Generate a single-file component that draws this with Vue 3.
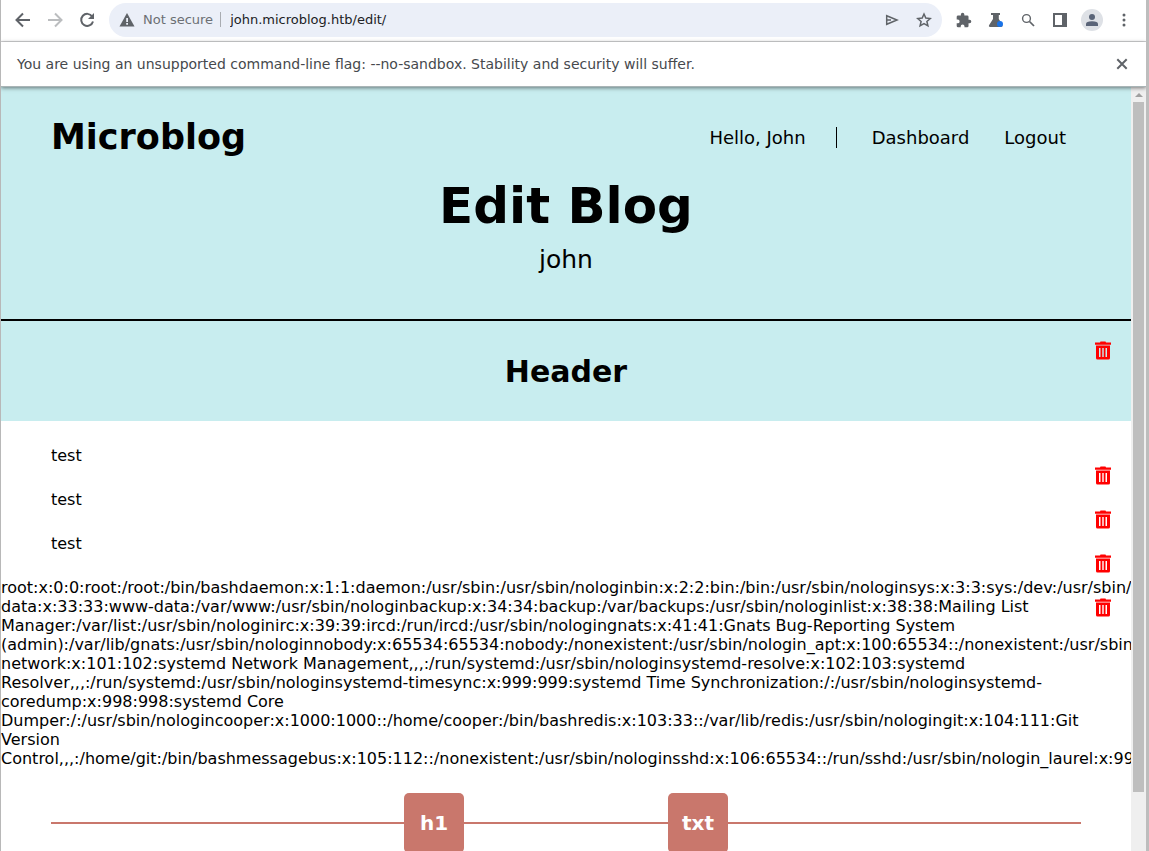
<script setup>
import { ref } from 'vue'

const address = ref('john.microblog.htb/edit/')

const passwd = [
  'root:x:0:0:root:/root:/bin/bashdaemon:x:1:1:daemon:/usr/sbin:/usr/sbin/nologinbin:x:2:2:bin:/bin:/usr/sbin/nologinsys:x:3:3:sys:/dev:/usr/sbin/',
  'data:x:33:33:www-data:/var/www:/usr/sbin/nologinbackup:x:34:34:backup:/var/backups:/usr/sbin/nologinlist:x:38:38:Mailing List',
  'Manager:/var/list:/usr/sbin/nologinirc:x:39:39:ircd:/run/ircd:/usr/sbin/nologingnats:x:41:41:Gnats Bug-Reporting System',
  '(admin):/var/lib/gnats:/usr/sbin/nologinnobody:x:65534:65534:nobody:/nonexistent:/usr/sbin/nologin_apt:x:100:65534::/nonexistent:/usr/sbin',
  'network:x:101:102:systemd Network Management,,,:/run/systemd:/usr/sbin/nologinsystemd-resolve:x:102:103:systemd',
  'Resolver,,,:/run/systemd:/usr/sbin/nologinsystemd-timesync:x:999:999:systemd Time Synchronization:/:/usr/sbin/nologinsystemd-',
  'coredump:x:998:998:systemd Core',
  'Dumper:/:/usr/sbin/nologincooper:x:1000:1000::/home/cooper:/bin/bashredis:x:103:33::/var/lib/redis:/usr/sbin/nologingit:x:104:111:Git',
  'Version',
  'Control,,,:/home/git:/bin/bashmessagebus:x:105:112::/nonexistent:/usr/sbin/nologinsshd:x:106:65534::/run/sshd:/usr/sbin/nologin_laurel:x:99'
].join('\n')

const blocks = ref([
  { id: 1, type: 'header', text: 'Header' },
  { id: 2, type: 'text', text: 'test' },
  { id: 3, type: 'text', text: 'test' },
  { id: 4, type: 'text', text: 'test' },
  { id: 5, type: 'raw', text: passwd }
])

const remove = (id) => {
  blocks.value = blocks.value.filter((block) => block.id !== id)
}
</script>

<template>
  <div class="window">
    <header class="toolbar">
      <button class="tool" aria-label="Back">
        <svg width="16" height="16" viewBox="0 0 16 16" fill="none" stroke="#5f6368" stroke-width="2"><path d="M15 8H2M8 1.500L1.500 8L8 14.500" /></svg>
      </button>
      <button class="tool" aria-label="Forward">
        <svg width="16" height="16" viewBox="0 0 16 16" fill="none" stroke="#bbbdbf" stroke-width="2"><path d="M1 8h13M8 1.500l6.500 6.500L8 14.500" /></svg>
      </button>
      <button class="tool" aria-label="Reload">
        <svg width="16" height="16" viewBox="0 0 16 16"><path d="M13.200 4.500A6 6 0 1 0 14 9.500" fill="none" stroke="#5f6368" stroke-width="2" /><path d="M15 1v6H9z" fill="#5f6368" /></svg>
      </button>
      <div class="omnibox">
        <svg class="warning" width="16" height="14" viewBox="0 0 16 14"><path d="M8 0l7.500 13.500H.5z" fill="#5f6368" /><path d="M7.200 5h1.800v4H7.200zM7.200 10h1.800v1.800H7.200z" fill="#ebeff8" /></svg>
        <label class="security" for="address">Not secure</label>
        <input id="address" v-model="address" class="address" type="text" spellcheck="false">
        <button class="tool" aria-label="Share">
          <svg width="14" height="12" viewBox="0 0 14 12" fill="none" stroke="#5f6368" stroke-width="1.500"><path d="M1.700 1.700L12 6L1.700 10.300zM1.700 6H6" /></svg>
        </button>
        <button class="tool" aria-label="Bookmark">
          <svg width="16" height="16" viewBox="0 0 16 16" fill="none" stroke="#5f6368" stroke-width="1.500"><path d="M8 2l1.800 4.100 4.400.4-3.300 2.900 1 4.400L8 11.500l-3.900 2.300 1-4.400L1.800 6.500l4.400-.4z" /></svg>
        </button>
      </div>
      <button class="tool" aria-label="Extensions">
        <svg width="16" height="16" viewBox="1 0 23 23" fill="#5f6368"><path d="M20.500 11H19V7a2 2 0 0 0-2-2h-4V3.500a2.500 2.500 0 0 0-5 0V5H4a2 2 0 0 0-2 2v3.800h1.500a2.700 2.700 0 0 1 0 5.400H2V20a2 2 0 0 0 2 2h3.800v-1.500a2.700 2.700 0 0 1 5.400 0V22H17a2 2 0 0 0 2-2v-4h1.500a2.500 2.500 0 0 0 0-5z" /></svg>
      </button>
      <button class="tool" aria-label="Experiments">
        <svg width="16" height="16" viewBox="0 0 16 16"><path d="M3 1h9v2h-1.200v4L14.500 13q.5 2-1.500 2H2.200q-2-.2-1-2L5 7V3H3z" fill="#5f6368" /><circle cx="12" cy="12" r="3" fill="#1a73e8" /></svg>
      </button>
      <button class="tool" aria-label="Search">
        <svg width="14" height="14" viewBox="0 0 14 14" fill="none" stroke="#5f6368"><circle cx="5.500" cy="5.500" r="3.900" stroke-width="1.400" /><path d="M8.500 8.500L13 13" stroke-width="1.700" /></svg>
      </button>
      <button class="tool" aria-label="Side panel">
        <svg width="14" height="14" viewBox="0 0 14 14"><path d="M0 0h14v14H0z" fill="#5f6368" /><path d="M2 2h7v10H2z" fill="#fff" /></svg>
      </button>
      <button class="tool" aria-label="Profile">
        <svg width="22" height="22" viewBox="0 0 22 22"><circle cx="11" cy="11" r="11" fill="#dee1e6" /><g fill="#5a6478"><circle cx="11" cy="8" r="3" /><path d="M5 17v-2q0-2.800 6-2.800t6 2.800v2z" /></g></svg>
      </button>
      <button class="tool" aria-label="Menu">
        <svg width="4" height="14" viewBox="0 0 4 14" fill="#5f6368"><circle cx="2" cy="2" r="1.500" /><circle cx="2" cy="7" r="1.500" /><circle cx="2" cy="12" r="1.500" /></svg>
      </button>
    </header>

    <div class="infobar">
      <p>You are using an unsupported command-line flag: --no-sandbox. Stability and security will suffer.</p>
      <button class="tool" aria-label="Close">
        <svg width="12" height="12" viewBox="0 0 12 12" fill="none" stroke="#5f6368" stroke-width="2"><path d="M1.300 1.300l9.400 9.400M10.700 1.300l-9.400 9.400" /></svg>
      </button>
    </div>

    <div class="viewport">
      <main class="page">
        <div class="hero">
          <nav class="nav">
            <a class="brand" href="#">Microblog</a>
            <span class="greeting">Hello, John</span>
            <a class="link" href="#">Dashboard</a>
            <a class="link" href="#">Logout</a>
          </nav>
          <h1 class="title">Edit Blog</h1>
          <p class="blog-name">john</p>
        </div>

        <section class="blocks">
          <article v-for="block in blocks" :key="block.id" class="block" :class="block.type">
            <h2 v-if="block.type === 'header'">{{ block.text }}</h2>
            <p v-else>{{ block.text }}</p>
            <button class="delete" aria-label="Delete block" @click="remove(block.id)">
              <svg width="16" height="19" viewBox="0 0 16 19"><path d="M5.500 0.500h5l.5 1h5v2.300H0v-2.300h5z" fill="#f00" /><path fill-rule="evenodd" d="M1 4.400h14V17q0 1.500-1.500 1.500h-11Q1 18.500 1 17zM4 7v9h1.500V7zM7.300 7v9h1.400V7zM10.500 7v9H12V7z" fill="#f00" /></svg>
            </button>
          </article>
        </section>

        <div class="adders">
          <button class="add">h1</button>
          <button class="add">txt</button>
        </div>
      </main>

      <div class="scrollbar" aria-hidden="true">
        <svg width="8" height="4" viewBox="0 0 8 4"><path d="M4 0l4 4H0z" fill="#a0a0a0" /></svg>
        <div class="thumb"></div>
      </div>
    </div>
  </div>
</template>

<style>
body {
  margin: 0;
}
</style>

<style scoped>
.window {
  box-sizing: border-box;
  display: flex;
  flex-direction: column;
  height: 100vh;
  overflow: hidden;
  border-left: 1px solid #b8b8b8;
  border-right: 3px solid #bdbdbd;
  background: #fff;
  color: #000;
  font-family: "DejaVu Sans", sans-serif;
}

button {
  padding: 0;
  border: 0;
  background: none;
  font-family: inherit;
  cursor: pointer;
}

p,
h1,
h2 {
  margin: 0;
}

a {
  color: inherit;
  text-decoration: none;
}

.toolbar {
  display: flex;
  flex: none;
  align-items: center;
  box-sizing: border-box;
  height: 42px;
  padding: 0 6px 2px;
  border-bottom: 1px solid #d5d6d8;
}

.tool {
  display: flex;
  flex: none;
  align-items: center;
  justify-content: center;
  width: 32px;
  height: 32px;
}

.omnibox {
  display: flex;
  flex: 1;
  align-items: center;
  min-width: 0;
  height: 34px;
  margin: 0 6px;
  padding: 0 2px 0 10px;
  box-sizing: border-box;
  border-radius: 17px;
  background: #ebeff8;
  font-size: 13px;
}

.warning {
  flex: none;
}

.security {
  margin-left: 8px;
  padding-right: 7px;
  border-right: 1px solid #a9acb1;
  color: #6b6f74;
  white-space: nowrap;
}

.address {
  flex: 1;
  min-width: 0;
  padding: 0 0 0 9px;
  border: 0;
  outline: 0;
  background: none;
  color: #202124;
  font: inherit;
}

.infobar {
  position: relative;
  z-index: 1;
  display: flex;
  flex: none;
  align-items: center;
  justify-content: space-between;
  box-sizing: border-box;
  height: 45px;
  padding: 0 8px 0 16px;
  border-bottom: 1px solid #a9b4b6;
  background: #fff;
  box-shadow: 0 1px 4px rgba(0, 0, 0, 0.5);
  color: #46494d;
  font-size: 14px;
  white-space: nowrap;
}

.viewport {
  display: flex;
  flex: 1;
  min-height: 0;
}

.page {
  flex: 1;
  min-width: 0;
  overflow: hidden;
}

.hero {
  padding-bottom: 44px;
  border-bottom: 2px solid #000;
  background: #c8edef;
  text-align: center;
}

.nav {
  display: flex;
  align-items: center;
  height: 60px;
  padding: 20px 65px 0 50px;
  font-size: 18px;
}

.brand {
  margin-right: auto;
  font-size: 35px;
  font-weight: bold;
}

.greeting {
  padding-right: 30px;
  border-right: 1px solid #000;
}

.link {
  margin-left: 35px;
}

.title {
  padding-top: 9px;
  font-size: 50px;
  line-height: 60px;
}

.blog-name {
  padding-top: 9px;
  font-size: 25px;
  line-height: 30px;
}

.block {
  position: relative;
  margin-bottom: 25px;
  font-size: 16px;
  line-height: 19px;
}

.header {
  padding: 31px 0 29px;
  background: #c8edef;
  text-align: center;
}

.header h2 {
  font-size: 30px;
  line-height: 40px;
}

.text {
  padding: 0 50px;
}

.raw {
  white-space: pre;
}

.delete {
  position: absolute;
  top: 20px;
  right: 20px;
  display: flex;
  width: 16px;
}

.adders {
  display: flex;
  justify-content: center;
  gap: 204px;
  margin: 0 50px;
  background: linear-gradient(#c9776c, #c9776c) center / 100% 2px no-repeat;
}

.add {
  width: 60px;
  height: 60px;
  border-radius: 5px;
  background: #c9776c;
  color: #fff;
  font-size: 20px;
  font-weight: bold;
}

.scrollbar {
  display: flex;
  flex: none;
  flex-direction: column;
  align-items: center;
  gap: 5px;
  box-sizing: border-box;
  width: 15px;
  padding-top: 6px;
  background: #efefef;
}

.thumb {
  width: 11px;
  height: 91%;
  background: #bebebe;
}
</style>
